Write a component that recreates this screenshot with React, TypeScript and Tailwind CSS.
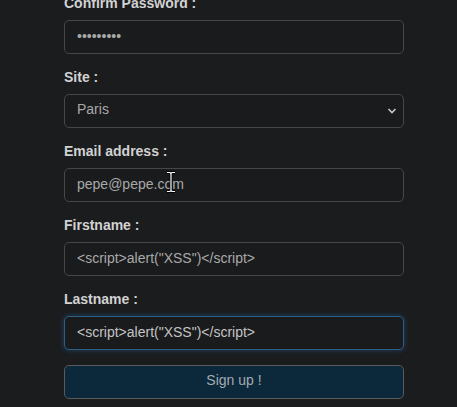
import React from 'react';

const fieldCls =
  'block w-full h-[34px] rounded-[5px] border border-[#46474a] bg-[#1a1b1d] px-3 pb-[3px] text-[14px] text-[#a9a9a9] outline-none';

function Label({ children }: { children: React.ReactNode }) {
  return <label className="block h-5 mb-[7px] text-[14px] leading-5 font-bold text-[#d2d2d2]">{children}</label>;
}

export default function App() {
  return (
    <div className="min-h-[407px] bg-[#1b1c1e] overflow-hidden" style={{ fontFamily: '"Liberation Sans", Arial, sans-serif' }}>
      <form className="w-[340px] ml-16 -mt-[7px]" onSubmit={(e) => e.preventDefault()}>
        <div className="mb-[13px]">
          <Label>Confirm Password :</Label>
          <input type="password" readOnly defaultValue="123456789" className={fieldCls} />
        </div>

        <div className="mb-[13px]">
          <Label>Site :</Label>
          <div className="relative">
            <select defaultValue="Paris" className={fieldCls + ' appearance-none'}>
              <option>Paris</option>
              <option>Lyon</option>
            </select>
            <svg className="absolute right-[7px] top-[13px] pointer-events-none" width="10" height="8" viewBox="0 0 10 8" fill="none">
              <path d="M1.5 2l3.5 3.5L8.5 2" stroke="#c8c8c8" strokeWidth="1.6" />
            </svg>
          </div>
        </div>

        <div className="mb-[13px]">
          <Label>Email address :</Label>
          <div className="relative">
            <input type="text" readOnly defaultValue="pepe@pepe.com" className={fieldCls} />
            {/* mouse text cursor */}
            <svg className="absolute left-[102px] top-[3px] pointer-events-none" width="10" height="22" viewBox="0 0 10 22" fill="none">
              <path d="M1 1.5h3l1 1 1-1h3M1 20.5h3l1-1 1 1h3M5 2.5v17" stroke="#000" strokeWidth="2.8" />
              <path d="M1 1.5h3l1 1 1-1h3M1 20.5h3l1-1 1 1h3M5 2.5v17" stroke="#fff" strokeWidth="1.2" />
            </svg>
          </div>
        </div>

        <div className="mb-[13px]">
          <Label>Firstname :</Label>
          <input type="text" readOnly defaultValue={'<script>alert("XSS")</script>'} className={fieldCls} />
        </div>

        <div>
          <Label>Lastname :</Label>
          <input
            type="text"
            readOnly
            defaultValue={'<script>alert("XSS")</script>'}
            className={fieldCls + ' !border-[#2c5f88] !text-[#c4c4c4] shadow-[0_0_5px_1px_rgba(40,110,170,0.35)]'}
          />
        </div>

        <button
          type="submit"
          className="mt-[15px] block w-full h-[34px] rounded-[5px] border border-[#585a5d] bg-[#0c283b] pb-[3px] text-[14px] text-[#a3abb3]"
        >
          Sign up !
        </button>
      </form>
    </div>
  );
}
